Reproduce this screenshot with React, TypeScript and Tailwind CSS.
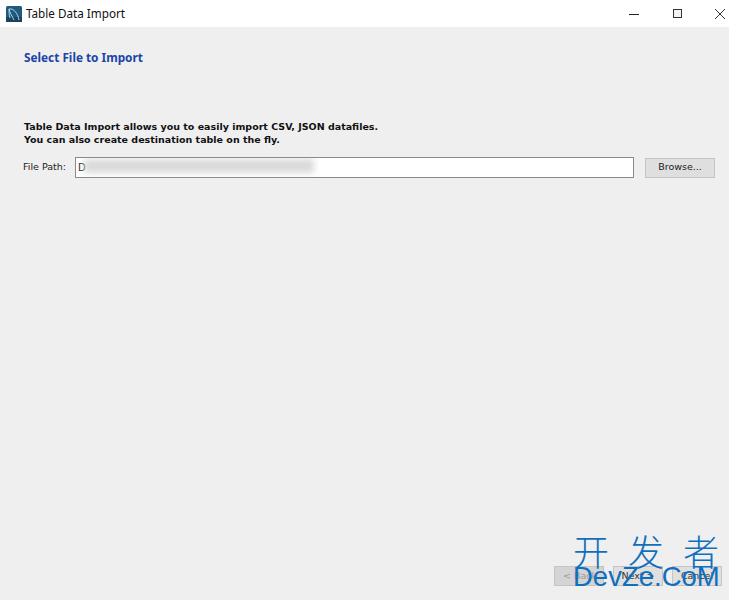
export default function App() {
  return (
    <div className="relative w-[729px] h-[600px] overflow-hidden flex flex-col bg-[#efefef] text-black font-['Liberation_Sans',sans-serif]">
      <div className="h-[27px] bg-white flex items-center shrink-0">
        <svg className="ml-[6px] w-[16px] h-[16px]" viewBox="0 0 16 16">
          <rect width="16" height="16" rx="1.5" fill="#1f5a7e" />
          <rect x="0" y="11" width="16" height="5" fill="#17455f" />
          <path d="M3 3 C8 2 12 8 13 14 M3 3 C4 7 6 10 8 14 M3 3 C3 6 3 9 4 12" stroke="#b9d3e0" strokeWidth="1" fill="none" />
        </svg>
        <span className="ml-[4px] text-[11.7px] font-['Noto_Sans',sans-serif] text-[#111]">Table Data Import</span>
        <div className="ml-auto flex items-center">
          <svg className="w-[12px] h-[12px] mr-[31px]" viewBox="0 0 12 12"><path d="M1 6.5H11" stroke="#222" strokeWidth="1" /></svg>
          <svg className="w-[12px] h-[12px] mr-[31px]" viewBox="0 0 12 12"><rect x="2.5" y="1.5" width="8" height="8" fill="#f4f4f4" stroke="#333" strokeWidth="1" /></svg>
          <svg className="w-[12px] h-[12px] mr-[3px]" viewBox="0 0 12 12"><path d="M1 1L11 11M11 1L1 11" stroke="#333" strokeWidth="1" /></svg>
        </div>
      </div>
      <div className="flex-1 flex flex-col pl-[24px] pr-[14px] font-['DejaVu_Sans',sans-serif]">
        <h1 className="mt-[23px] text-[11.8px] leading-[14px] font-bold text-[#1a44a8] font-['Noto_Sans',sans-serif]">Select File to Import</h1>
        <p className="mt-[57px] text-[9.5px] leading-[12.5px] font-bold text-[#111]">
          Table Data Import allows you to easily import CSV, JSON datafiles.<br />
          You can also create destination table on the fly.
        </p>
        <div className="mt-[11px] flex items-center">
          <label className="text-[9.5px] text-[#222] w-[52px] -ml-[1px] shrink-0">File Path:</label>
          <div className="relative w-[559px] h-[21px] bg-white border border-[#8a8a8a] text-[10px] leading-[19px] pl-[2px] text-[#222] overflow-hidden">
            D
            <div className="absolute left-[8px] top-[1px] w-[230px] h-[14px] bg-[#dadada] blur-[3px]" />
          </div>
          <button className="ml-[11px] w-[70px] h-[20px] bg-[#dfdfdf] border border-[#c4c4c4] text-[9.5px] text-[#222]">Browse...</button>
        </div>
        <div className="mt-auto mb-[14px] -mr-[7px] flex justify-end gap-[9px]">
          <button className="w-[50px] h-[20px] bg-[#d4d4d4] border border-[#c4c4c4] text-[9.5px] text-[#999] text-left pl-[8px]">&lt; Back</button>
          <button className="w-[50px] h-[20px] bg-[#e0e0e0] border border-[#c4c4c4] text-[9.5px] text-[#333]">Next &gt;</button>
          <button className="w-[50px] h-[20px] bg-[#e0e0e0] border border-[#c4c4c4] text-[9.5px] text-[#333]">Cancel</button>
        </div>
      </div>
      <div className="absolute left-[573px] top-[531px] w-[146px] text-[#0f6fbd]">
        <div className="flex justify-between text-[36px] leading-[38px] font-['Noto_Sans_CJK_SC',sans-serif] font-light">
          <span>开</span><span>发</span><span>者</span>
        </div>
        <div className="text-[27.5px] leading-[30px] -mt-[7px] font-['Liberation_Sans',sans-serif] whitespace-nowrap">DevZe.CoM</div>
      </div>
    </div>
  );
}
